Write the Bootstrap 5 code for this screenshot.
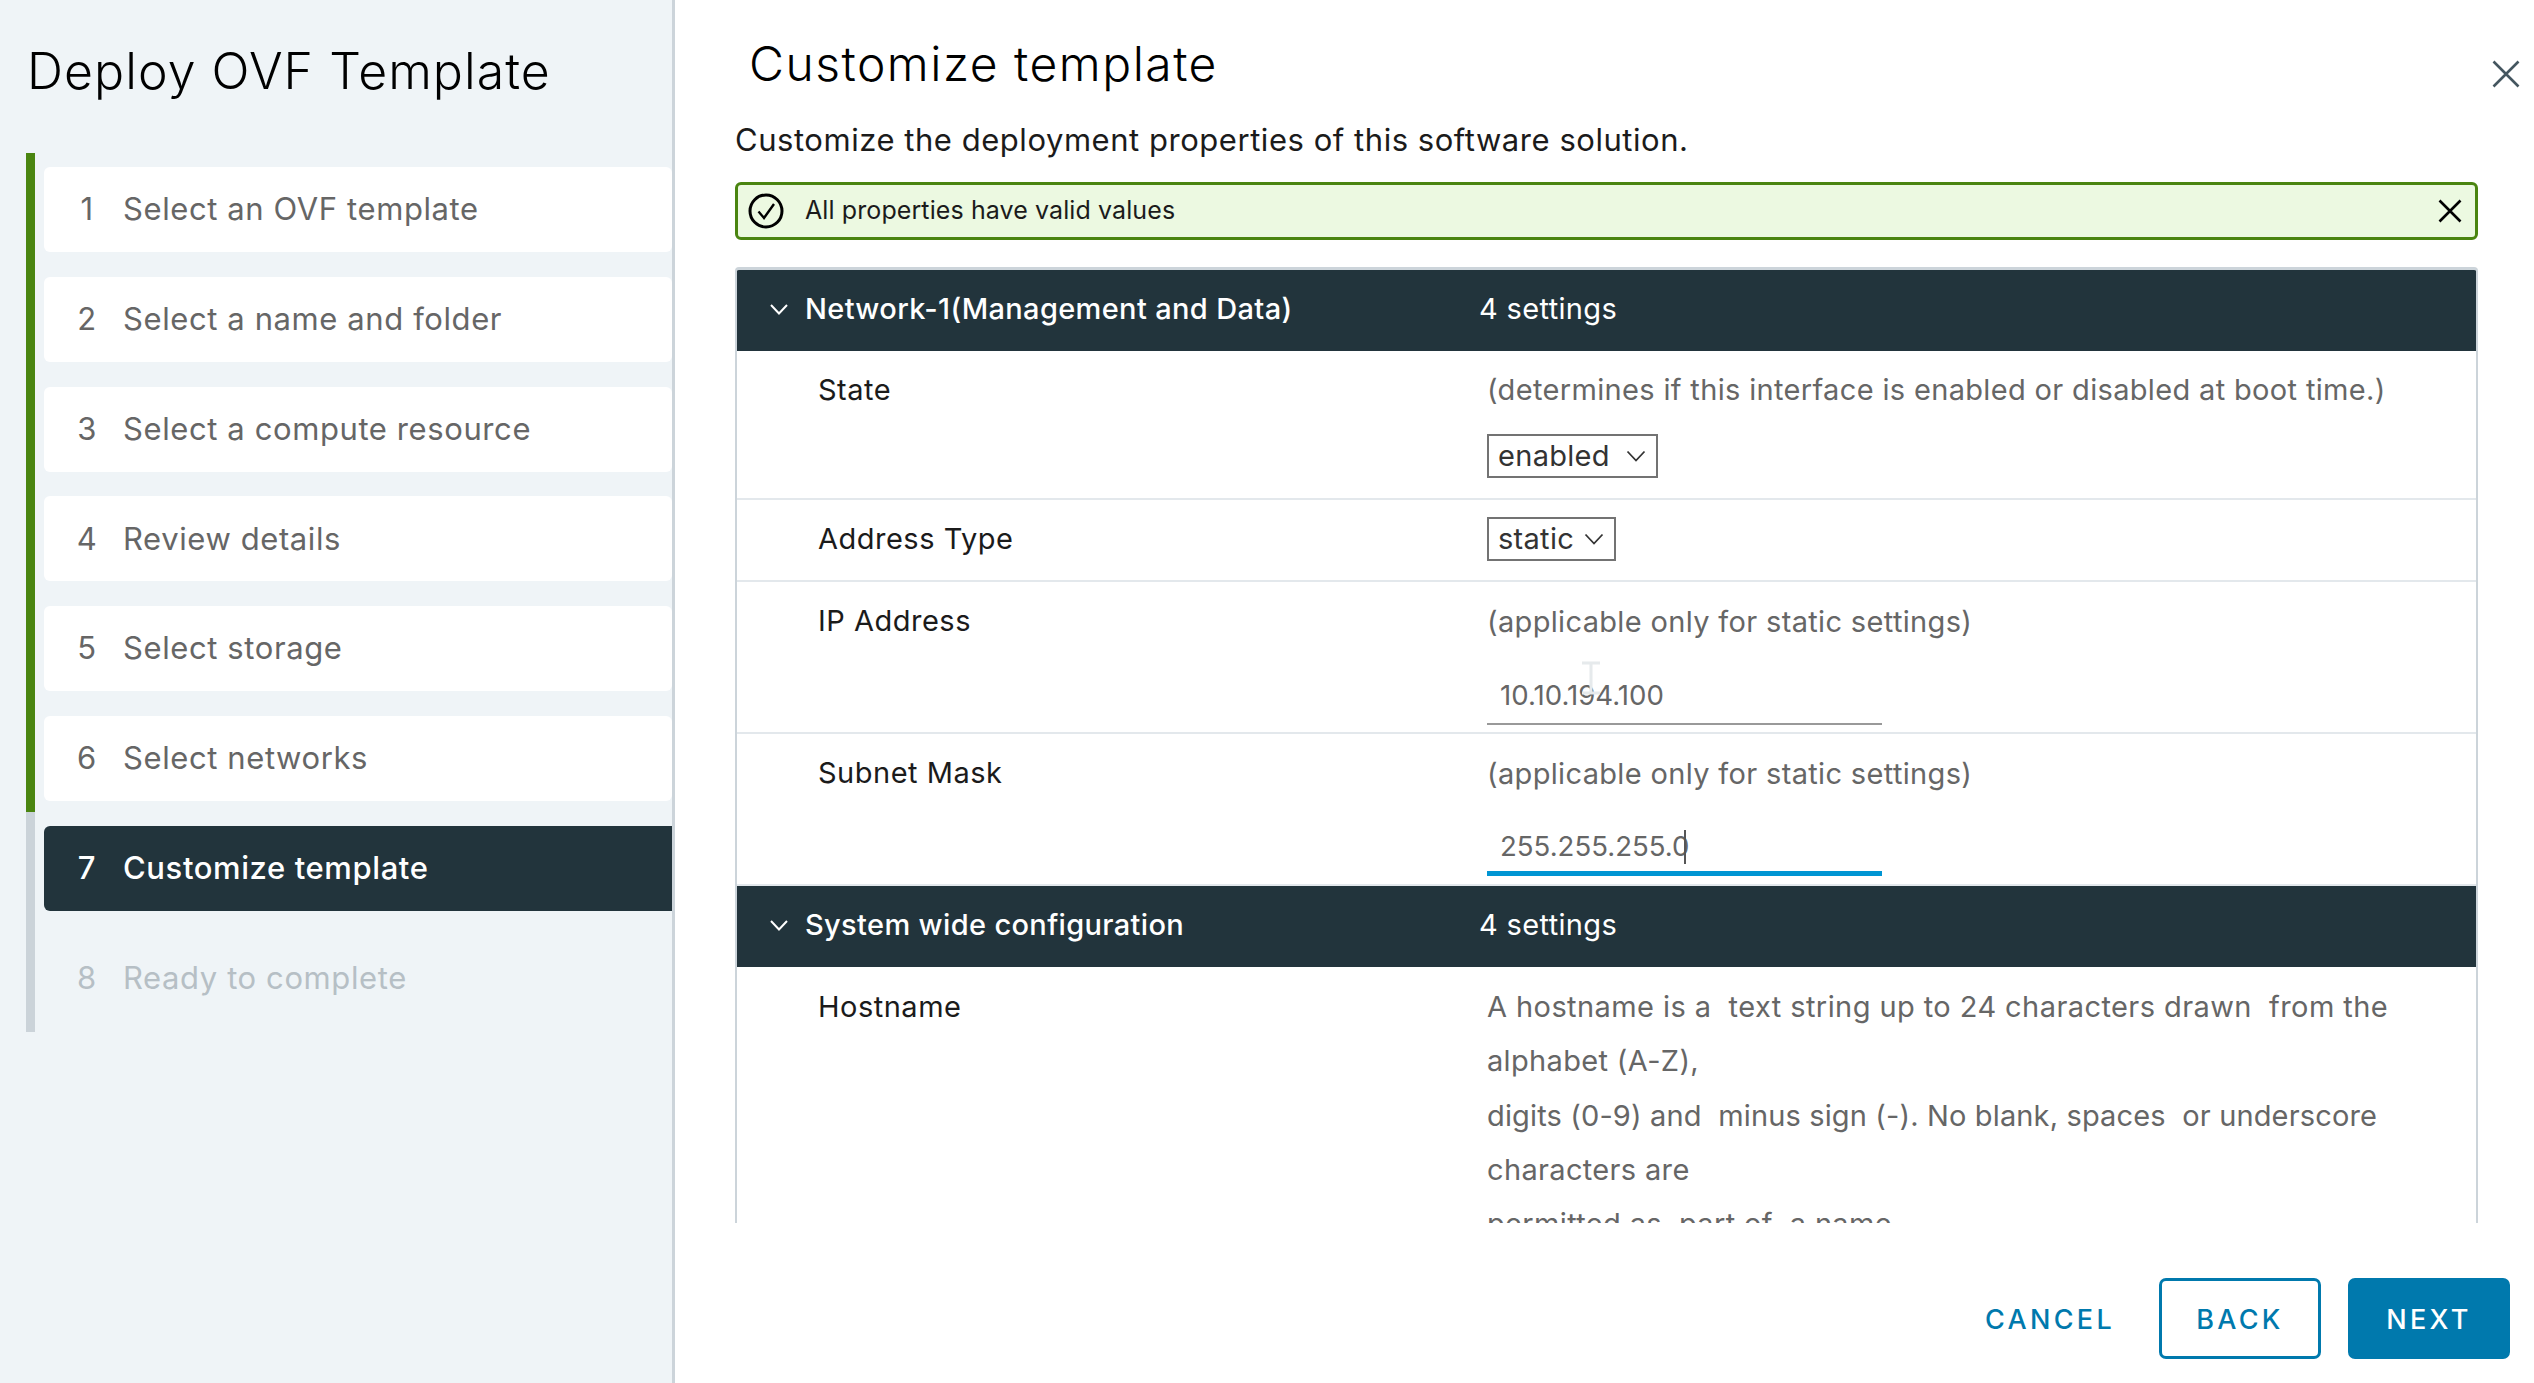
<!doctype html>
<html lang="en">
<head>
<meta charset="utf-8">
<title>Deploy OVF Template</title>
<link rel="stylesheet" href="https://cdn.jsdelivr.net/npm/bootstrap@5.3.0/dist/css/bootstrap.min.css">
<style>
html,body{height:100%;overflow:hidden}
body{font-family:Inter,"Noto Sans",sans-serif;font-size:30px;color:#1b1b1b;background:#fff}
.ovf-shell{height:1383px}
.ovf-side{width:675px;flex:none;background:#eff4f7;border-right:3px solid #ccd4da;padding-top:47px}
.ovf-side-title{font-size:50px;font-weight:300;letter-spacing:1.05px;line-height:48px;margin:0 0 58px 27px;color:#000;white-space:nowrap}
.ovf-steps{margin:0 0 0 26px;padding:14px 0 12px;list-style:none;border-left:9px solid #cbd3d9;position:relative;width:646px}
.ovf-progress{position:absolute;left:-9px;top:0;width:9px;height:659px;background:#4a8510}
.ovf-step{height:85px;margin:0 0 24.75px 9px;display:flex;align-items:center;font-size:31px;letter-spacing:.6px;color:#666;white-space:nowrap}
.ovf-step:last-child{margin-bottom:0}
.ovf-step.done{background:#fff;border-radius:6px}
.ovf-step.current{background:#22343c;color:#fff;font-weight:500;border-radius:6px 0 0 6px}
.ovf-step.todo{color:#b6bfc5}
.ovf-num{width:79px;text-align:center;padding-left:7px;flex:none}
.ovf-main{flex:1;min-width:0;position:relative;padding:0 24px 24px 60px}
.ovf-main-title{font-size:48px;font-weight:300;letter-spacing:1.5px;line-height:48px;color:#000;margin:0 0 0 14px;padding-top:40px;height:115px;white-space:nowrap}
.ovf-desc{line-height:50px;height:50px;margin:0 0 17px 0;font-size:31px;letter-spacing:.54px;white-space:nowrap}
.ovf-close{position:absolute;right:14px;top:60px;width:28px;height:28px;color:#44565f;background:none;border:0;padding:0;line-height:0}
.ovf-alert{height:58px;margin-right:32px;background:#ecf9e1;border:3px solid #4a8510;border-radius:6px;padding:0 13px 0 10px;font-size:25px;letter-spacing:.1px;margin-bottom:27px;color:#1b1b1b}
.ovf-alert-ic{margin-right:21px;flex:none}
.ovf-alert-x{background:none;border:0;padding:0;line-height:0;color:#000}
.ovf-table{height:956px;margin-right:32px;overflow:hidden;border:solid #ccd4da;border-width:3px 2px 0 2px;border-radius:4px 4px 0 0}
.ovf-head{height:81px;padding-bottom:3px;background:#22343c;color:#fff;font-size:29px;font-weight:500;letter-spacing:.35px;white-space:nowrap}
.ovf-chev{width:68px;flex:none;display:flex;justify-content:flex-end;padding-right:17px;line-height:0}
.ovf-head-name{width:674px;flex:none}
.ovf-head-count{font-weight:400}
.ovf-row{border-bottom:2px solid #e3e8ec;padding-left:81px;font-size:29px;line-height:54px}
.ovf-k{width:669px;flex:none;color:#1b1b1b;white-space:nowrap;letter-spacing:.5px}
.ovf-hint{color:#666;white-space:nowrap;letter-spacing:.34px}
.ovf-r1{height:149px;padding-top:12px}
.ovf-r2{height:82px;padding-top:17px}
.ovf-r2 .ovf-k{line-height:44px}
.ovf-r3{height:152px;padding-top:12px}
.ovf-r3-val{padding-top:1px}
.ovf-r3-val .ovf-field{margin-top:21px}
.ovf-r5{padding-top:13px}
.ovf-sel.form-select{display:block;height:44px;margin-top:17px;border:2px solid #737373;border-radius:0;padding:0 0 0 9px;font-family:inherit;font-size:29px;line-height:38px;letter-spacing:.3px;color:#333;box-shadow:none;background-image:url("data:image/svg+xml,%3Csvg xmlns='http://www.w3.org/2000/svg' viewBox='0 0 20 12'%3E%3Cpath d='M1.5 1.5 10 10.5 18.5 1.5' fill='none' stroke='%23333' stroke-width='1.8'/%3E%3C/svg%3E");background-size:20px 12px;background-position:right 10px center}
.ovf-enabled{width:171px}
.ovf-sel.ovf-static{width:129px;margin-top:0}
.ovf-field{position:relative;width:395px}
.ovf-inp.form-control{height:55px;border:0;border-bottom:2px solid #999;border-radius:0;padding:0 0 3px 13px;font-family:inherit;font-size:27.6px;color:#666;background:transparent;box-shadow:none}
.ovf-inp.ovf-focus{height:54px;border-bottom:5px solid #0095d3;padding-bottom:1px}
.ovf-caret{position:absolute;left:197px;top:8px;width:2px;height:34px;background:#565656}
.ovf-beam{position:absolute;left:94px;top:-9px;line-height:0}
.ovf-long{color:#666;line-height:54.3px;letter-spacing:.34px}
.ovf-long span{display:block;white-space:pre}
.ovf-long .ovf-l1{letter-spacing:.42px}
.ovf-long .ovf-l3{letter-spacing:.14px}
.ovf-foot{margin-top:55px;height:81px;gap:27px}
.ovf-btn.btn{height:81px;width:162px;font-family:inherit;font-size:27px;font-weight:500;letter-spacing:3.3px;border-radius:7px;border:3px solid #0079ad;color:#0079ad;background:#fff;padding:4px 0 0}
.ovf-btn.ovf-flat{border-color:transparent;background:transparent;width:172px;margin-right:-4px}
.ovf-btn.ovf-fill{background:#0079ad;color:#fff}
</style>
</head>
<body>
<div class="ovf-shell d-flex">
  <aside class="ovf-side">
    <h1 class="ovf-side-title">Deploy OVF Template</h1>
    <ol class="ovf-steps">
      <li class="ovf-progress" aria-hidden="true"></li>
      <li class="ovf-step done"><span class="ovf-num">1</span>Select an OVF template</li>
      <li class="ovf-step done"><span class="ovf-num">2</span>Select a name and folder</li>
      <li class="ovf-step done"><span class="ovf-num">3</span>Select a compute resource</li>
      <li class="ovf-step done"><span class="ovf-num">4</span>Review details</li>
      <li class="ovf-step done"><span class="ovf-num">5</span>Select storage</li>
      <li class="ovf-step done"><span class="ovf-num">6</span>Select networks</li>
      <li class="ovf-step current"><span class="ovf-num">7</span>Customize template</li>
      <li class="ovf-step todo"><span class="ovf-num">8</span>Ready to complete</li>
    </ol>
  </aside>
  <main class="ovf-main">
    <h2 class="ovf-main-title">Customize template</h2>
    <button class="ovf-close" aria-label="Close"><svg width="28" height="28" viewBox="0 0 28 28"><path d="M1.5 1.5 26.5 26.5M26.5 1.5 1.5 26.5" stroke="currentColor" stroke-width="2.6" fill="none"/></svg></button>
    <p class="ovf-desc">Customize the deployment properties of this software solution.</p>
    <div class="ovf-alert d-flex align-items-center">
      <svg class="ovf-alert-ic" width="36" height="36" viewBox="0 0 36 36"><circle cx="18" cy="18" r="16" fill="none" stroke="#000" stroke-width="3"/><path d="M10.5 18.5 16 25 26 11" fill="none" stroke="#000" stroke-width="2.4"/></svg>
      <span class="flex-grow-1">All properties have valid values</span>
      <button class="ovf-alert-x" aria-label="Dismiss"><svg width="24" height="24" viewBox="0 0 24 24"><path d="M1.5 1.5 22.5 22.5M22.5 1.5 1.5 22.5" stroke="currentColor" stroke-width="2.6" fill="none"/></svg></button>
    </div>
    <div class="ovf-table">
      <div class="ovf-head d-flex align-items-center">
        <span class="ovf-chev"><svg width="18" height="11" viewBox="0 0 18 11"><path d="M1 1 9 9.5 17 1" fill="none" stroke="#fff" stroke-width="2"/></svg></span>
        <span class="ovf-head-name">Network-1(Management and Data)</span>
        <span class="ovf-head-count">4 settings</span>
      </div>
      <div class="ovf-row ovf-r1 d-flex">
        <div class="ovf-k">State</div>
        <div>
          <div class="ovf-hint">(determines if this interface is enabled or disabled at boot time.)</div>
          <select class="form-select ovf-sel ovf-enabled" aria-label="State"><option>enabled</option></select>
        </div>
      </div>
      <div class="ovf-row ovf-r2 d-flex">
        <div class="ovf-k">Address Type</div>
        <select class="form-select ovf-sel ovf-static" aria-label="Address Type"><option>static</option></select>
      </div>
      <div class="ovf-row ovf-r3 d-flex">
        <div class="ovf-k">IP Address</div>
        <div class="ovf-r3-val">
          <div class="ovf-hint">(applicable only for static settings)</div>
          <div class="ovf-field">
            <input class="form-control ovf-inp" value="10.10.194.100" aria-label="IP Address">
            <span class="ovf-beam"><svg width="20" height="34" viewBox="0 0 20 34"><path d="M1 2H19M10 2V32M1 32H19" stroke="#e6eaec" stroke-width="3" fill="none"/></svg></span>
          </div>
        </div>
      </div>
      <div class="ovf-row ovf-r3 d-flex">
        <div class="ovf-k">Subnet Mask</div>
        <div class="ovf-r3-val">
          <div class="ovf-hint">(applicable only for static settings)</div>
          <div class="ovf-field">
            <input class="form-control ovf-inp ovf-focus" value="255.255.255.0" aria-label="Subnet Mask">
            <span class="ovf-caret"></span>
          </div>
        </div>
      </div>
      <div class="ovf-head d-flex align-items-center">
        <span class="ovf-chev"><svg width="18" height="11" viewBox="0 0 18 11"><path d="M1 1 9 9.5 17 1" fill="none" stroke="#fff" stroke-width="2"/></svg></span>
        <span class="ovf-head-name">System wide configuration</span>
        <span class="ovf-head-count">4 settings</span>
      </div>
      <div class="ovf-row ovf-r5 d-flex">
        <div class="ovf-k">Hostname</div>
        <div class="ovf-long"><span class="ovf-l1">A hostname is a  text string up to 24 characters drawn  from the</span><span>alphabet (A-Z),</span><span class="ovf-l3">digits (0-9) and  minus sign (-). No blank, spaces  or underscore</span><span>characters are</span><span>permitted as  part of  a name.</span></div>
      </div>
    </div>
    <div class="ovf-foot d-flex justify-content-end">
      <button class="btn ovf-btn ovf-flat">CANCEL</button>
      <button class="btn ovf-btn">BACK</button>
      <button class="btn ovf-btn ovf-fill">NEXT</button>
    </div>
  </main>
</div>
<script src="https://cdn.jsdelivr.net/npm/bootstrap@5.3.0/dist/js/bootstrap.bundle.min.js"></script>
</body>
</html>
